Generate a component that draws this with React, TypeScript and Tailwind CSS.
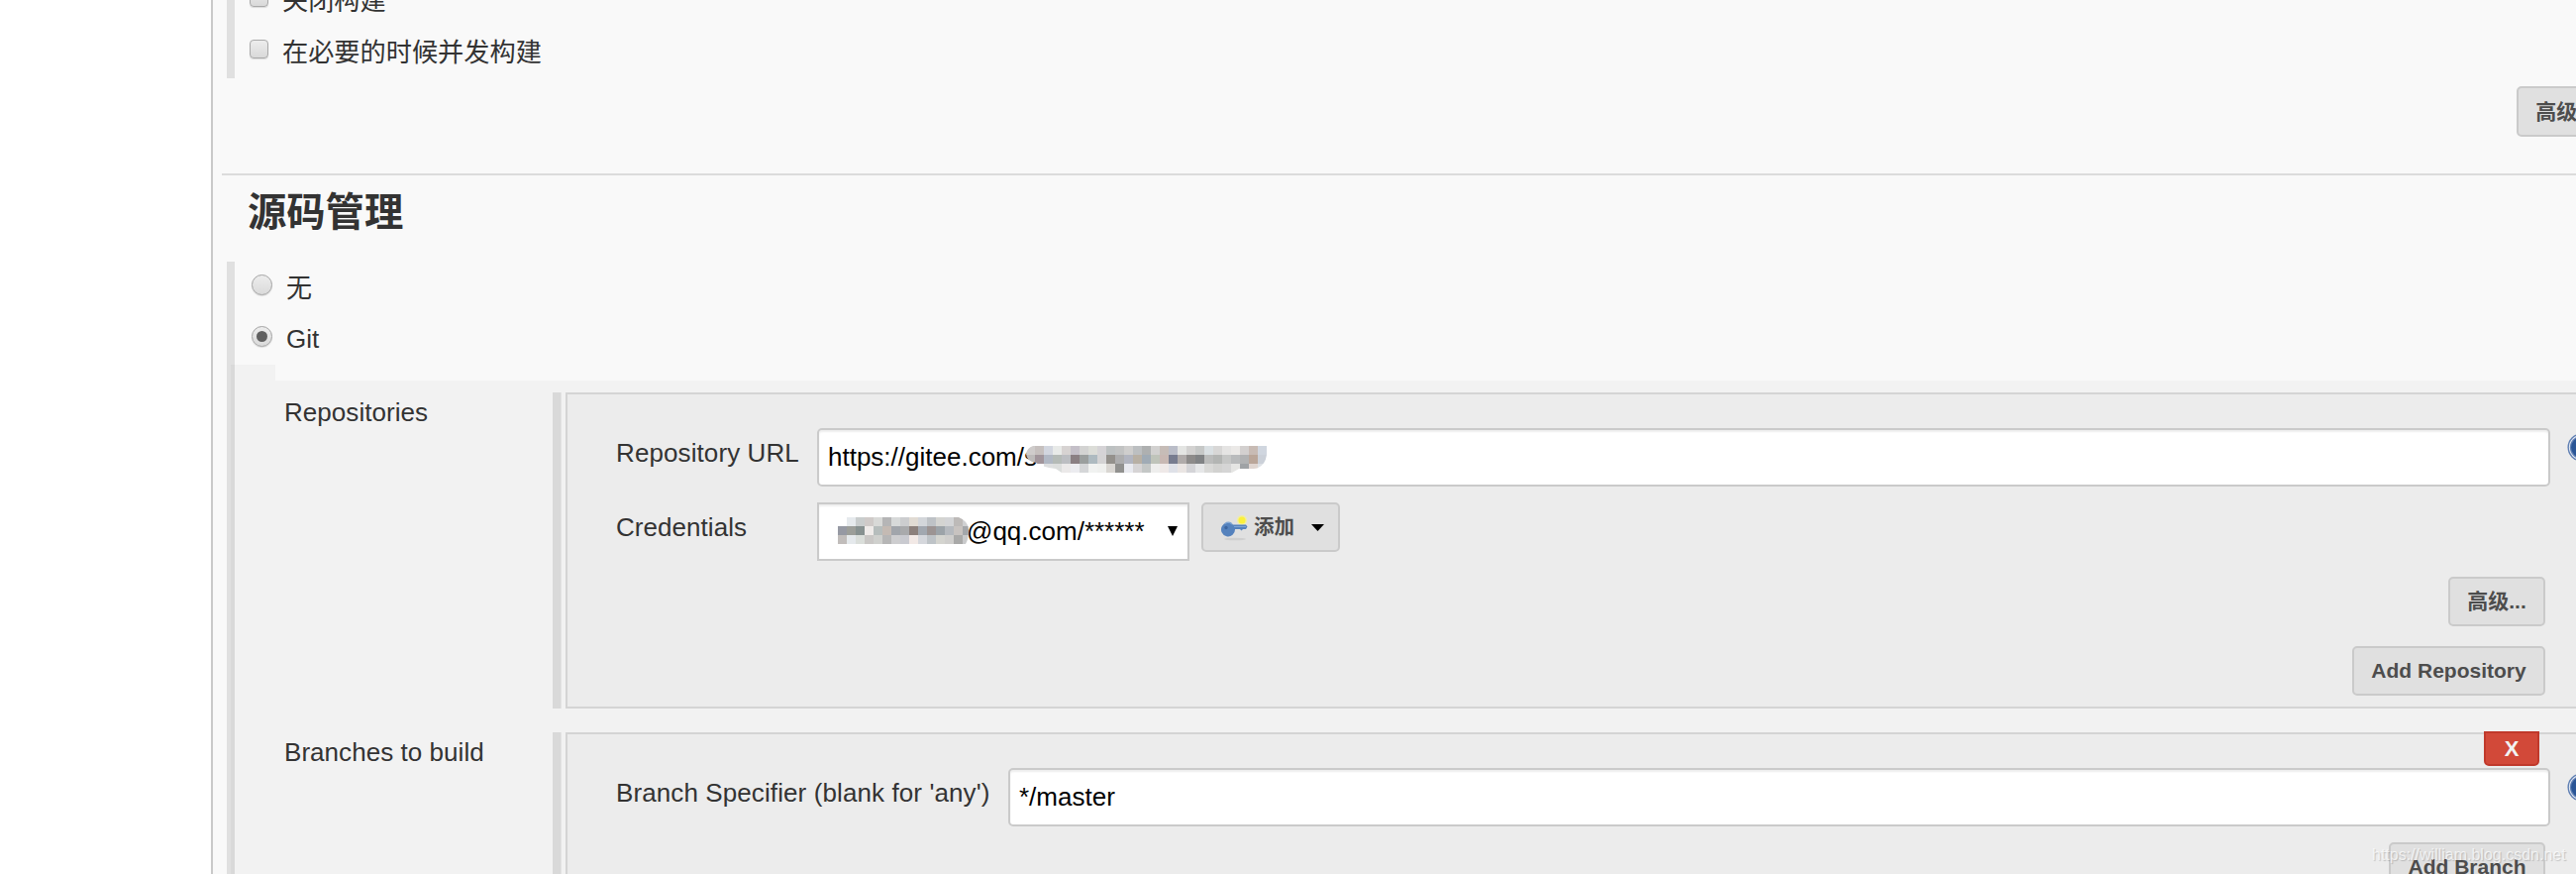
import React from "react";

const urlMosaic = [
  ["#cfcccb", "#c6c0be", "#d2d6df", "#e8eae8", "#d7d3d2", "#c4bfc8", "#d3d3d2", "#dcddd8", "#d5d3d6", "#bdc1c2", "#c2c3c3", "#cfcecd", "#bcbfc1", "#aeb0b0", "#d2d1d0", "#c6bcb7", "#babdc8", "#e4e5e3", "#d3d2d1", "#c6c8c7", "#dae0e3", "#d8d7d6", "#e5e4e3", "#ebe9e7", "#d3d0cf", "#c8bbb4", "#d0d6df"],
  ["#bdbbba", "#a1959b", "#b1b8c4", "#b5bbb7", "#bcbec2", "#8a7f83", "#9b9f9e", "#aebac0", "#d4d3d4", "#94918c", "#adadae", "#b2b5c0", "#b8b0a4", "#a0abb5", "#bfc4ba", "#c8b8b3", "#777c8f", "#b0abaa", "#8d8b8a", "#818385", "#bbbcbb", "#b3b5b3", "#c6c7c6", "#b9bbbc", "#b1b2b3", "#baa699", "#cbd0d8"],
  ["", "", "#dedfe0", "#dcdedd", "#ebe9e9", "#ececf0", "#d5d6d8", "#f1f2f1", "#eff0ee", "#d9d6d2", "#91918f", "#e9eaf0", "#d6d4d5", "#c4c7c6", "#eeeeed", "#efe9e8", "#dfe1e8", "#eae5e3", "#d4d4d7", "#e6e7e8", "#d9d9d7", "#d2d2d0", "#d5d5d5", "#e5e5e3", "#9fa2a5", "#dfd5d0", "#dde1e5"],
];

const userMosaic = [
  ["", "#e6eaed", "#c9cdcd", "#cfcac8", "#d8d9d7", "#b5b5b6", "#d7d9d9", "#cccdcf", "#e1dbd3", "#d3d6da", "#bec2c6", "#d4d4d1", "#d3d4d6", "#bdbab8", "#cfd0d2"],
  ["#9699a3", "#9c9e99", "#879190", "#efebe9", "#b6bdbc", "#c4bab3", "#a1a5ab", "#a9aaac", "#8c807c", "#a2a8b0", "#9c9493", "#9ca3a8", "#b5b9be", "#c8c3c0", "#a3a6aa"],
  ["#c1bdbb", "#e5e9ec", "#dadeda", "#c9c7c5", "#cfd0cd", "#b6b6b6", "#cdcdcf", "#c9cad0", "#f2e9e6", "#d5d7dc", "#bec3c7", "#d4d4cf", "#cfcecc", "#a9a9a8", "#c9cacb"],
];

function Mosaic({ rows, className, shape, clip }: { rows: string[][]; className: string; shape: string; clip: string }) {
  return (
    <svg className={className} viewBox={`0 0 ${rows[0].length * 9} 27`} shapeRendering="crispEdges">
      <clipPath id={clip}>
        <path d={shape} />
      </clipPath>
      <g clipPath={`url(#${clip})`}>
        {rows.map((row, y) =>
          row.map((fill, x) => (fill ? <rect key={`${x}-${y}`} x={x * 9} y={y * 9} width="9" height="9" fill={fill} /> : null)),
        )}
      </g>
    </svg>
  );
}

function Checkbox() {
  return (
    <span className="block h-[19px] w-[19px] shrink-0 rounded-[4px] border-[1.5px] border-[#a9a9a9] bg-linear-to-b from-[#ededed] to-[#d9d9d9] shadow-[0_1px_1px_rgba(0,0,0,0.12)]" />
  );
}

function Radio({ on = false }: { on?: boolean }) {
  return (
    <span className="flex h-[21px] w-[21px] shrink-0 items-center justify-center rounded-full border border-[#a3a3a3] bg-linear-to-b from-[#ededed] to-[#dadada] shadow-[0_1px_1px_rgba(0,0,0,0.12)]">
      {on && <span className="h-[11px] w-[11px] rounded-full bg-[#606060]" />}
    </span>
  );
}

function Button({ children, className = "" }: { children: React.ReactNode; className?: string }) {
  return (
    <button
      className={`flex h-[50px] shrink-0 items-center justify-center rounded-[5px] border-2 border-[#cacaca] bg-[#e0e0e0] text-[21px] leading-[30px] font-bold whitespace-nowrap text-[#4d4d4d] ${className}`}
    >
      {children}
    </button>
  );
}

function Help() {
  return (
    <svg className="h-[29px] w-[29px] shrink-0" viewBox="0 0 29 29">
      <circle cx="14.5" cy="14.5" r="14" fill="#5f7fb3" />
      <circle cx="14.5" cy="14.5" r="12.6" fill="#e6ebf3" />
      <circle cx="14.5" cy="14.5" r="11.6" fill="#5f7fb3" />
      <circle cx="14.5" cy="14.5" r="10.4" fill="#2a5596" />
    </svg>
  );
}

function KeyIcon() {
  return (
    <svg className="h-[27px] w-[27px] shrink-0" viewBox="0 0 27 27">
      <ellipse cx="14" cy="25" rx="11" ry="1.3" fill="#cfcfcf" />
      <circle cx="21" cy="6" r="5" fill="#f2ee9e" />
      <circle cx="21" cy="6" r="3.5" fill="#fbf03c" />
      <path d="M12 10.500H25L26.500 12.500L25 15H22L20.500 16.500L19 15H14A7 7 0 1 1 12 10.500Z" fill="#5582bd" />
      <path d="M4 9.500A5 5 0 0 1 11 10" stroke="#7fa5d4" strokeWidth="1.500" fill="none" />
      <circle cx="5" cy="13.500" r="1.700" fill="#3c659f" />
      <path d="M13 12.500H25" stroke="#80a5d4" strokeWidth="1" />
    </svg>
  );
}

function Field({ label, children }: { label: string; children: React.ReactNode }) {
  return (
    <div className="flex h-[319px] shrink-0">
      <div className="w-[271px] shrink-0 pt-[5px] leading-[30px] tracking-[0.05px]">{label}</div>
      <div className="w-[8px] shrink-0 bg-[#d9d9d9]" />
      <div className="mr-[4px] w-px shrink-0 bg-[#e3e3e3]" />
      <div className="relative flex-1 border-2 border-r-0 border-[#d4d4d4] bg-[#ececec] pl-[50px]">{children}</div>
    </div>
  );
}

const inputStyle =
  "relative flex h-[59px] items-center border-2 border-[#cacaca] bg-white pl-[9px] leading-[30px] whitespace-pre text-black shadow-[inset_0_2px_2px_rgba(0,0,0,0.07)]";

export default function App() {
  return (
    <div className="relative flex h-[882px] w-[2601px] overflow-hidden bg-white pl-[213px] font-['Liberation_Sans','Noto_Sans_CJK_SC',sans-serif] text-[26px] text-[#333]">
      <main className="h-[882px] flex-1 overflow-hidden border-l-2 border-[#c9c9c9] bg-[#f9f9f9]">
        <section className="flex h-[175px] items-start justify-between">
          <div className="ml-[14px] flex h-[79px] flex-col justify-end border-l-8 border-[#e0e0e0] pb-[7px] pl-[15px]">
            <div className="flex h-[59px] shrink-0 items-center gap-[14px]">
              <Checkbox />
              <span className="pt-[7px] text-[26.2px] leading-[40px]">关闭构建</span>
            </div>
            <div className="flex h-[45px] shrink-0 items-center gap-[14px]">
              <Checkbox />
              <span className="pt-[7px] text-[26.2px] leading-[40px]">在必要的时候并发构建</span>
            </div>
          </div>
          <Button className="mt-[87px] -mr-[38px] h-[51px] w-[98px]">高级...</Button>
        </section>

        <div className="ml-[9px] h-[2px] bg-[#dcdcdc]" />
        <h2 className="flex h-[87px] items-start pt-[8px] pl-[35px] text-[39.3px] leading-[58px] font-bold">源码管理</h2>

        <div className="ml-[14px] flex h-[104px] flex-col border-l-8 border-[#e0e0e0] pt-[7px] pl-[17px]">
          <div className="flex h-[33px] items-center gap-[14px]">
            <Radio />
            <span className="pt-[6px] leading-[40px]">无</span>
          </div>
          <div className="mt-[19px] flex h-[33px] items-center gap-[14px]">
            <Radio on />
            <span className="pt-[4px] leading-[30px]">Git</span>
          </div>
        </div>

        <div className="ml-[14px] flex">
          <div className="h-[514px] w-[4px] shrink-0 bg-[#e0e0e0]" />
          <div className="h-[514px] w-[4px] shrink-0 bg-[#d9d9d9]" />
          <div className="h-[514px] w-[41px] shrink-0 bg-[#f2f2f2]" />
          <div className="mt-[16px] flex h-[498px] flex-1 flex-col gap-6 bg-[#f2f2f2] pt-[12px] pl-[9px]">
            <Field label="Repositories">
              <div className="mt-[34px] flex h-[59px] items-start">
                <span className="-ml-px w-[203px] shrink-0 pt-[10px] leading-[30px] tracking-[0.1px]">Repository URL</span>
                <div className={`${inputStyle} w-[1750px] shrink-0 rounded-[5px] pb-[2px]`}>
                  https://gitee.com/s
                  <Mosaic
                    rows={urlMosaic}
                    clip="url-clip"
                    className="absolute top-[16px] left-[209px] h-[27px] w-[243px]"
                    shape="M7 0H243V9Q241 22 230 23H215L208 27H36L30 23Q15 21 10 17Q0 15 0 8Q1 2 7 0Z"
                  />
                </div>
                <div className="mt-[5px] -mr-[20px] ml-[17px]">
                  <Help />
                </div>
              </div>
              <div className="mt-[16px] flex items-start">
                <span className="-ml-px w-[203px] shrink-0 pt-[10px] leading-[30px] tracking-[0.05px]">Credentials</span>
                <div className={`${inputStyle} w-[376px] justify-between pr-[10px] pb-[2px]`}>
                  <span className="pl-[140px]">@qq.com/******</span>
                  <svg className="h-[10px] w-[10px]" viewBox="0 0 10 10">
                    <path d="M0 0H10L5 10Z" fill="#000" />
                  </svg>
                  <Mosaic
                    rows={userMosaic}
                    clip="user-clip"
                    className="absolute top-[13px] left-[19px] h-[27px] w-[135px]"
                    shape="M0 5L9 0H122Q132 4 132 13Q132 22 129 27H0Z"
                  />
                </div>
                <Button className="ml-3 w-[140px] pr-[14px] pl-[18px]">
                  <KeyIcon />
                  <span className="ml-[6px] text-[20.5px]">添加</span>
                  <svg className="ml-auto h-[7px] w-[13px]" viewBox="0 0 13 7">
                    <path d="M0 0H13L6.500 7Z" fill="#000" />
                  </svg>
                </Button>
              </div>
              <div className="mt-[16px] flex flex-col items-end gap-5 pr-[31px]">
                <Button className="w-[98px]">高级...</Button>
                <Button className="w-[195px]">Add Repository</Button>
              </div>
            </Field>

            <Field label="Branches to build">
              <div className="mt-[34px] flex h-[59px] items-start">
                <span className="-ml-px w-[396px] shrink-0 pt-[10px] leading-[30px] tracking-[0.1px]">Branch Specifier (blank for 'any')</span>
                <div className={`${inputStyle} w-[1557px] shrink-0 rounded-[5px] pb-[2px]`}>*/master</div>
                <div className="mt-[5px] -mr-[20px] ml-[17px]">
                  <Help />
                </div>
              </div>
              <div className="mt-4 flex justify-end pr-[31px]">
                <Button className="w-[158px]">Add Branch</Button>
              </div>
              <button className="absolute -top-[3px] right-[37px] flex h-[35px] w-[56px] items-center justify-center rounded-b-[5px] border-2 border-[#c0392b] bg-[#d24939] text-[22px] leading-none font-bold text-[#f2f2f2]">
                X
              </button>
            </Field>
          </div>
        </div>
      </main>
      <div className="absolute top-[853px] left-[2395px] text-[16px] leading-[20px] whitespace-nowrap text-white/70 [text-shadow:1px_1px_1px_rgba(0,0,0,0.18)]">
        https://william.blog.csdn.net
      </div>
    </div>
  );
}
